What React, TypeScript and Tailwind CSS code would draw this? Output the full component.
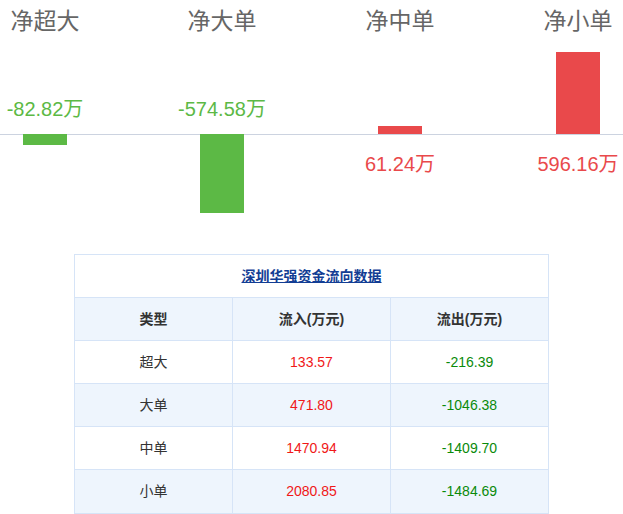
const font = '"Liberation Sans", "Noto Sans CJK SC", sans-serif';

const bars = [
  { title: "净超大", value: "-82.82万", cx: 45, y: 134, h: 11, neg: true },
  { title: "净大单", value: "-574.58万", cx: 222, y: 134, h: 79, neg: true },
  { title: "净中单", value: "61.24万", cx: 400, y: 126, h: 8, neg: false },
  { title: "净小单", value: "596.16万", cx: 578, y: 52, h: 82, neg: false },
];

const rows = [
  ["超大", "133.57", "-216.39"],
  ["大单", "471.80", "-1046.38"],
  ["中单", "1470.94", "-1409.70"],
  ["小单", "2080.85", "-1484.69"],
];

function Chart() {
  return (
    <svg width="623" height="240" className="block" style={{ fontFamily: font }}>
      <line x1="0" y1="134.5" x2="623" y2="134.5" stroke="#ccd3e0" strokeWidth="1" />
      {bars.map((b) => (
        <g key={b.title}>
          <text x={b.cx} y="29" textAnchor="middle" fontSize="23" fill="#666">
            {b.title}
          </text>
          <rect x={b.cx - 22} y={b.y} width="44" height={b.h} fill={b.neg ? "#5cb945" : "#e9494b"} />
          <text
            x={b.cx}
            y={b.neg ? 116 : 171}
            textAnchor="middle"
            fontSize="20"
            fill={b.neg ? "#5cb945" : "#e9494b"}
          >
            {b.value}
          </text>
        </g>
      ))}
    </svg>
  );
}

export default function App() {
  return (
    <div className="w-[623px] h-[514px] bg-white overflow-hidden" style={{ fontFamily: font }}>
      <Chart />
      <div className="ml-[74px] mt-[14px] w-[475px] border border-[#d6e4f7] text-[14px]">
        <div className="h-[43px] flex items-center justify-center border-b border-[#d6e4f7]">
          <span className="font-bold underline text-[#123d94]">深圳华强资金流向数据</span>
        </div>
        <div className="grid grid-cols-[158px_158px_1fr] h-[43px] bg-[#eef5fd] border-b border-[#d6e4f7] font-bold text-[#333]">
          <div className="flex items-center justify-center border-r border-[#d6e4f7]">类型</div>
          <div className="flex items-center justify-center border-r border-[#d6e4f7]">流入(万元)</div>
          <div className="flex items-center justify-center">流出(万元)</div>
        </div>
        {rows.map((r, i) => (
          <div
            key={r[0]}
            className={`grid grid-cols-[158px_158px_1fr] h-[43px] ${i % 2 === 1 ? "bg-[#eef5fd]" : "bg-white"} ${i < rows.length - 1 ? "border-b border-[#d6e4f7]" : ""}`}
          >
            <div className="flex items-center justify-center border-r border-[#d6e4f7] text-[#333]">{r[0]}</div>
            <div className="flex items-center justify-center border-r border-[#d6e4f7] text-[#f01818]">{r[1]}</div>
            <div className="flex items-center justify-center text-[#0a8a0a]">{r[2]}</div>
          </div>
        ))}
      </div>
    </div>
  );
}
